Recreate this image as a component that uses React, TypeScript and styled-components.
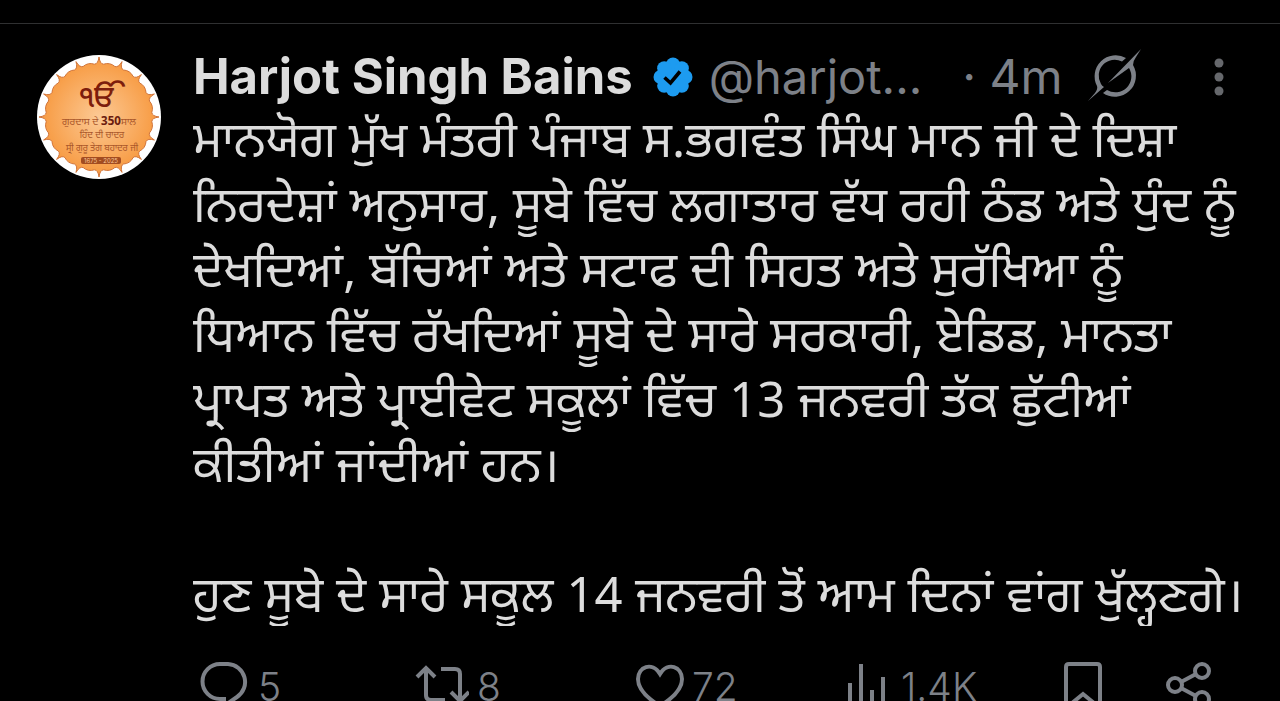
import React from "react";
import styled, { createGlobalStyle } from "styled-components";

const GlobalStyle = createGlobalStyle`
  * { box-sizing: border-box; }
  html, body { margin: 0; background: #000; }
  body {
    height: 100vh;
    overflow: hidden;
    color: #dcdcdc;
    font-family: Inter, "Noto Sans Gurmukhi", "Noto Sans", sans-serif;
  }
`;

const Timeline = styled.main`
  padding-top: 23px;
`;

const Post = styled.article`
  display: flex;
  align-items: flex-start;
  gap: 32px;
  padding: 24px 24px 16px 37px;
  border-top: 1px solid #2f3031;
`;

const AvatarLink = styled.a`
  flex: none;
  width: 124px;
  height: 124px;
  margin-top: 7px;
  border-radius: 50%;
  overflow: hidden;
  background: #fff;
  svg { display: block; }
`;

const Content = styled.div`
  flex: 1;
  min-width: 0;
`;

const Header = styled.header`
  display: flex;
  align-items: center;
  height: 58px;
  font-size: 48px;
  line-height: 56px;
  color: #7d8188;
  white-space: nowrap;
`;

const Name = styled.a`
  color: #dcdcdc;
  font-size: 49px;
  font-weight: 700;
  text-decoration: none;
`;

const Badge = styled.svg`
  flex: none;
  width: 40px;
  height: 40px;
  margin: 0 16px 0 20px;
`;

const Handle = styled.a`
  color: inherit;
  font-size: 47px;
  text-decoration: none;
`;

const Time = styled.time`
  margin-left: 40px;
`;

const IconButton = styled.button`
  display: flex;
  flex: none;
  padding: 0;
  border: 0;
  background: none;
  color: #7d8188;
  svg { display: block; }
`;

const HeaderActions = styled.div`
  display: flex;
  flex: 1;
  align-items: center;
  justify-content: space-between;
  margin: 0 32px 0 24px;
`;

const Body = styled.div`
  font-family: "Noto Sans", "Noto Sans Gurmukhi", sans-serif;
  font-size: 49px;
  line-height: 65px;
  overflow: hidden;
  p { margin: 0 0 65px; white-space: nowrap; }
  p:last-child { margin: 0; }
`;

const Actions = styled.footer`
  display: grid;
  grid-template-columns: 215fr 221fr 211fr 217fr 102fr 46px;
  margin: 36px 44px 0 7px;
`;

const Action = styled.button`
  display: flex;
  align-items: flex-start;
  gap: 8px;
  padding: 0;
  border: 0;
  background: none;
  color: #7d8188;
  font: 300 39px/50px Inter, sans-serif;
  svg { display: block; }
`;

const polar = (r: number, deg: number) => {
  const a = ((deg - 90) * Math.PI) / 180;
  return `${(62 + r * Math.cos(a)).toFixed(1)} ${(62 + r * Math.sin(a)).toFixed(1)}`;
};

const sunPath =
  `M${polar(60, 0)}` +
  Array.from({ length: 16 }, (_, i) => {
    const a = i * 22.5;
    return `Q${polar(53, a + 1)} ${polar(53, a + 5)}Q${polar(56, a + 11.25)} ${polar(53, a + 17.5)}Q${polar(53, a + 21.5)} ${polar(60, a + 22.5)}`;
  }).join("") +
  "Z";

const AvatarArt = () => (
  <svg width="124" height="124" viewBox="0 0 124 124" aria-hidden="true">
    <defs>
      <radialGradient id="sun">
        <stop offset="0" stopColor="#fcc995" />
        <stop offset="1" stopColor="#f7993f" />
      </radialGradient>
    </defs>
    <path d={sunPath} fill="url(#sun)" stroke="#d0743a" strokeWidth="1" />
    <g textAnchor="middle" fill="#a9562a" fontFamily='"Noto Sans Gurmukhi", Inter, sans-serif'>
      <text x="64" y="52" fontSize="30" fontWeight="500" fill="#7d1d0c">ੴ</text>
      <text x="62" y="70" fontSize="10">ਗੁਰਦਾਸ ਦੇ <tspan fontWeight="700" fontSize="12" fill="#6b1d10">350</tspan>ਸਾਲ</text>
      <text x="65" y="83" fontSize="9">ਹਿੰਦ ਦੀ ਚਾਦਰ</text>
      <text x="65" y="96" fontSize="9">ਸ੍ਰੀ ਗੁਰੂ ਤੇਗ ਬਹਾਦਰ ਜੀ</text>
    </g>
    <rect x="44" y="102" width="40" height="7" rx="2" fill="#a24c20" />
    <text x="64" y="108" fontSize="6" textAnchor="middle" fill="#f9c695" fontFamily="Inter, sans-serif">1675 - 2025</text>
  </svg>
);

const stroke = { fill: "none", stroke: "currentColor", strokeWidth: 4 };

export default function App() {
  return (
    <>
      <GlobalStyle />
      <Timeline>
        <Post>
          <AvatarLink href="#profile" aria-label="Harjot Singh Bains"><AvatarArt /></AvatarLink>
          <Content>
            <Header>
              <Name href="#profile">Harjot Singh Bains</Name>
              <Badge viewBox="0 0 40 40" role="img" aria-label="Verified">
                <g fill="#1d9bf0">
                  <circle cx="20" cy="20" r="16" />
                  {Array.from({ length: 8 }, (_, i) => (
                    <circle key={i} cx={20 + 12.500 * Math.sin((i * Math.PI) / 4)} cy={20 - 12.500 * Math.cos((i * Math.PI) / 4)} r="7" />
                  ))}
                </g>
                <path d="M11.500 20.500l6 5.500 9.500-11.500" fill="none" stroke="#000" strokeWidth="3.600" />
              </Badge>
              <Handle href="#profile">@harjot...</Handle>
              <Time>· 4m</Time>
              <HeaderActions>
                <IconButton aria-label="Explain this post">
                  <svg width="55" height="58" viewBox="0 -1 55 58" fill="currentColor">
                    <path d="M39 9A21 21 0 0 0 10 37Q11 40 8 44L1 52 17 38Q15 37 14 35A16 16 0 0 1 35 12.500Z" />
                    <path d="M16 44A21 21 0 0 0 46 16Q46 12 49 8L54 0 21 34 42 19A16 16 0 0 1 20 41Z" />
                  </svg>
                </IconButton>
                <IconButton aria-label="More">
                  <svg width="10" height="38" viewBox="0 0 10 38" fill="#66686c">
                    <circle cx="5" cy="5" r="4.500" /><circle cx="5" cy="19" r="4.500" /><circle cx="5" cy="33" r="4.500" />
                  </svg>
                </IconButton>
              </HeaderActions>
            </Header>
            <Body lang="pa">
              <p>
                ਮਾਨਯੋਗ ਮੁੱਖ ਮੰਤਰੀ ਪੰਜਾਬ ਸ.ਭਗਵੰਤ ਸਿੰਘ ਮਾਨ ਜੀ ਦੇ ਦਿਸ਼ਾ<br />
                ਨਿਰਦੇਸ਼ਾਂ ਅਨੁਸਾਰ, ਸੂਬੇ ਵਿੱਚ ਲਗਾਤਾਰ ਵੱਧ ਰਹੀ ਠੰਡ ਅਤੇ ਧੁੰਦ ਨੂੰ<br />
                ਦੇਖਦਿਆਂ, ਬੱਚਿਆਂ ਅਤੇ ਸਟਾਫ ਦੀ ਸਿਹਤ ਅਤੇ ਸੁਰੱਖਿਆ ਨੂੰ<br />
                ਧਿਆਨ ਵਿੱਚ ਰੱਖਦਿਆਂ ਸੂਬੇ ਦੇ ਸਾਰੇ ਸਰਕਾਰੀ, ਏਡਿਡ, ਮਾਨਤਾ<br />
                ਪ੍ਰਾਪਤ ਅਤੇ ਪ੍ਰਾਈਵੇਟ ਸਕੂਲਾਂ ਵਿੱਚ 13 ਜਨਵਰੀ ਤੱਕ ਛੁੱਟੀਆਂ<br />
                ਕੀਤੀਆਂ ਜਾਂਦੀਆਂ ਹਨ।
              </p>
              <p>ਹੁਣ ਸੂਬੇ ਦੇ ਸਾਰੇ ਸਕੂਲ 14 ਜਨਵਰੀ ਤੋਂ ਆਮ ਦਿਨਾਂ ਵਾਂਗ ਖੁੱਲ੍ਹਣਗੇ।</p>
            </Body>
            <Actions>
              <Action aria-label="5 replies">
                <svg width="50" height="48" viewBox="0 0 50 48" {...stroke}><path d="M20 2h8a18 18 0 0 1 9 33L24 44v-7h-4a17.500 17.500 0 0 1 0-35z" /></svg>5
              </Action>
              <Action aria-label="8 reposts">
                <svg width="54" height="48" viewBox="0 0 54 48" {...stroke}><path d="M2 15l9-9 9 9M11 7v26q0 5 5 5h14M26 7h14q5 0 5 5v26M36 30l9 9 9-9" /></svg>8
              </Action>
              <Action aria-label="72 likes">
                <svg width="48" height="48" viewBox="0 0 48 48" {...stroke}><path d="M24 12C16-1 2 5 2 17c0 10 9 19 22 27 13-8 22-17 22-27C46 5 32-1 24 12z" /></svg>72
              </Action>
              <Action aria-label="1.4K views">
                <svg width="46" height="48" viewBox="0 0 46 48" {...stroke}><path d="M3 44V21M14 44V2M25 44V28M36 44V15" /></svg>1.4K
              </Action>
              <Action aria-label="Bookmark">
                <svg width="38" height="48" viewBox="0 0 38 48" {...stroke}><path d="M2 46V5q0-3 3-3h28q3 0 3 3v41L19 32z" /></svg>
              </Action>
              <Action aria-label="Share">
                <svg width="46" height="48" viewBox="0 0 46 48" {...stroke}><circle cx="9" cy="23" r="7" /><circle cx="36" cy="9" r="7" /><circle cx="36" cy="37" r="7" /><path d="M15 20l15-8M15 26l15 8" /></svg>
              </Action>
            </Actions>
          </Content>
        </Post>
      </Timeline>
    </>
  );
}
